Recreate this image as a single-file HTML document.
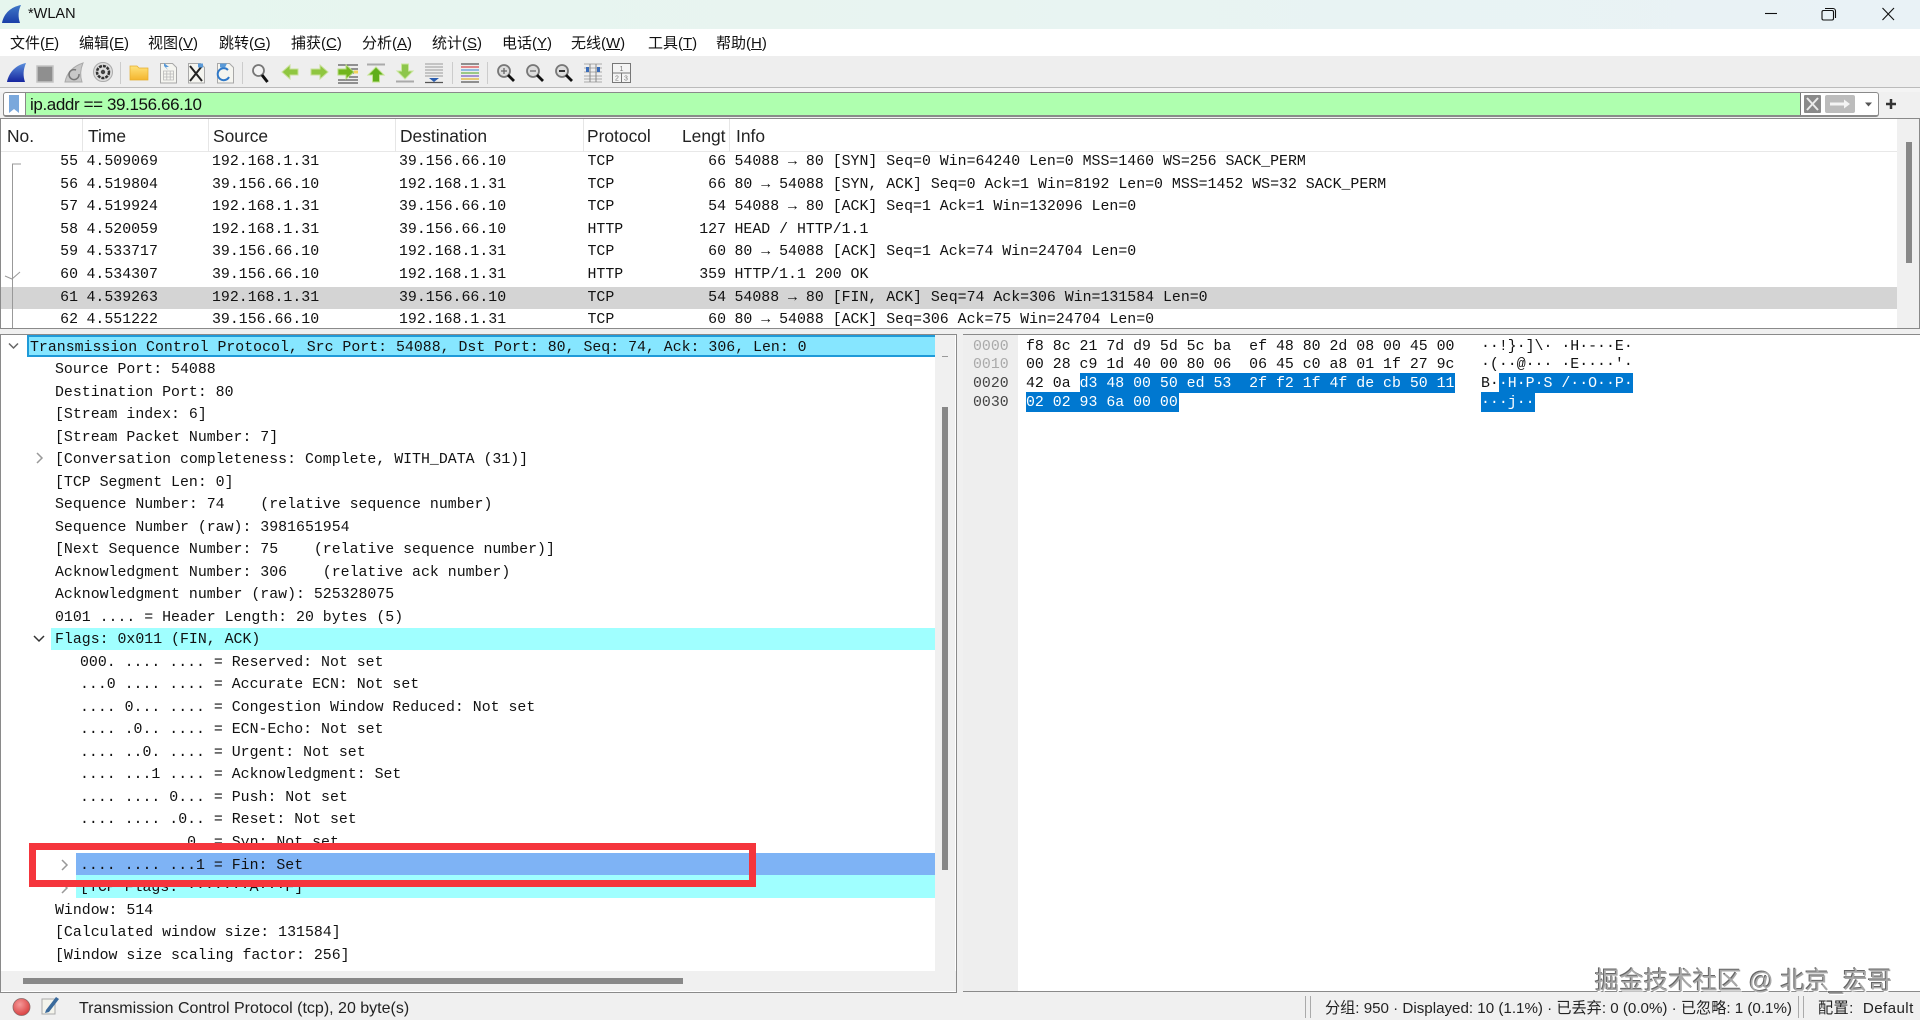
<!DOCTYPE html>
<html><head><meta charset="utf-8"><title>*WLAN</title>
<style>
html,body{margin:0;padding:0;width:1920px;height:1020px;overflow:hidden;background:#f0f0f0}
body{position:relative;font-family:"Liberation Sans","Noto Sans CJK SC",sans-serif;color:#111}
.a{position:absolute}
.m{position:absolute;top:31px;height:26px;line-height:26px;font-size:15px;white-space:nowrap;color:#111}
.m u{text-decoration:underline}
.h{position:absolute;top:1px;height:33px;line-height:33px;font-size:17.4px;color:#222;white-space:nowrap}
.s{position:absolute;top:0;width:1px;height:33px;background:#e6e6e6}
.mono{font-family:"Liberation Mono",monospace;font-size:14.88px;white-space:pre;color:#111}
.p{position:absolute;left:1px;width:1897px;height:22.5px;line-height:22.5px}
.p span{position:absolute;top:0}
.c1{right:1820px;left:auto}.c2{left:85.5px}.c3{left:211px}.c4{left:398px}.c5{left:586.5px}.c6{right:1172px}.c7{left:733.5px}
.d{position:absolute;height:22.5px;line-height:22.5px}
.x{position:absolute;height:19px;line-height:19px;font-family:"Liberation Mono",monospace;font-size:14.88px;white-space:pre;color:#111}
.w{color:#fff}
</style></head>
<body>
<!-- title bar -->
<div class="a" style="left:0;top:0;width:1920px;height:29px;background:linear-gradient(90deg,#e6f6ee,#e8f4f1 50%,#e9f2f6)"></div>
<svg class="a" style="left:0;top:0" width="30" height="29"><defs><linearGradient id="t" x1="0" y1="0" x2="0" y2="1"><stop offset="0" stop-color="#3f78c8"/><stop offset="1" stop-color="#1a3fa8"/></linearGradient></defs><path d="M2 23C4 13 11 7 21 5C18 11 18 17 20 23Z" fill="url(#t)"/></svg>
<div class="a" style="left:28px;top:4px;height:21px;line-height:21px;font-size:14.5px;color:#111">*WLAN</div>
<svg class="a" style="left:1750px;top:0" width="170" height="29" fill="none" stroke="#111" stroke-width="1.1"><path d="M15 13.5H27"/><path d="M73.5 10.5h8.5a1.5 1.5 0 0 1 1.5 1.5v6.5a1.5 1.5 0 0 1-1.5 1.5h-8.5a1.5 1.5 0 0 1-1.5-1.5V12a1.5 1.5 0 0 1 1.5-1.5Z"/><path d="M75 8.5h8a2.5 2.5 0 0 1 2.5 2.5v7"/><path d="M132.500 8L144 20M144 8L132.500 20"/></svg>
<!-- menu -->
<div class="a" style="left:0;top:29px;width:1920px;height:27px;background:#fff"></div>
<div class="m" style="left:10px">文件(<u>F</u>)</div>
<div class="m" style="left:79px">编辑(<u>E</u>)</div>
<div class="m" style="left:148px">视图(<u>V</u>)</div>
<div class="m" style="left:219px">跳转(<u>G</u>)</div>
<div class="m" style="left:291px">捕获(<u>C</u>)</div>
<div class="m" style="left:362px">分析(<u>A</u>)</div>
<div class="m" style="left:432px">统计(<u>S</u>)</div>
<div class="m" style="left:502px">电话(<u>Y</u>)</div>
<div class="m" style="left:571px">无线(<u>W</u>)</div>
<div class="m" style="left:648px">工具(<u>T</u>)</div>
<div class="m" style="left:716px">帮助(<u>H</u>)</div>
<!-- toolbar -->
<div class="a" style="left:0;top:56px;width:1920px;height:31px;background:#eee"></div>
<div class="a" style="left:0;top:87px;width:1920px;height:1px;background:#bbb"></div>
<div class="a" style="left:0;top:88px;width:1920px;height:4px;background:#f4f4f4"></div>
<svg class="a" style="left:0;top:56px" width="660" height="34" viewBox="0 56 660 34">
<defs><linearGradient id="fin" x1="0" y1="0" x2="0" y2="1"><stop offset="0" stop-color="#5a8fdc"/><stop offset="1" stop-color="#16259e"/></linearGradient>
<linearGradient id="fol" x1="0" y1="0" x2="0" y2="1"><stop offset="0" stop-color="#ffe27a"/><stop offset="1" stop-color="#f4b52e"/></linearGradient></defs>
<path d="M7 82C9 72 16 65 26 63C23 70 23 76 25 82Z" fill="url(#fin)"/>
<rect x="37" y="66" width="16" height="16" fill="#8f8f8f" stroke="#c4c4c4" stroke-width="1.500"/>
<path d="M65 82C67 72 74 66 83 63C80 70 80 76 82 82Z" fill="#c8c8c8" stroke="#aaa"/><path d="M76 70a5 5 0 1 0 3 4" fill="none" stroke="#777" stroke-width="1.500"/>
<circle cx="103" cy="72" r="9.500" fill="#ddd" stroke="#aaa"/><circle cx="103" cy="72" r="6" fill="none" stroke="#333" stroke-width="2.500" stroke-dasharray="3 1"/><circle cx="103" cy="72" r="2.200" fill="#444"/>
<rect x="120" y="62" width="1" height="22" fill="#ccc"/>
<path d="M130 66h7l2 2h9v12h-18Z" fill="url(#fol)" stroke="#e5ad2e" stroke-width=".7"/>
<path d="M160.500 63.500h12l4 4v15.500h-16Z" fill="#f5f5f0" stroke="#a8a8a8"/><path d="M164 63l5 4h-3l2 3-4-4Z" fill="#5a9ad8"/><path d="M163.500 71h10v9h-10ZM163.500 74h10M163.500 77h10M166.800 71v9M170.200 71v9" fill="none" stroke="#b8b8b8" stroke-width=".8"/>
<path d="M188.500 63.500h12l4 4v15.500h-16Z" fill="#f5f5f0" stroke="#a8a8a8"/><path d="M190 66l12 15M202 66l-12 15" stroke="#222" stroke-width="2"/><path d="M198 63.500h5v4h-5Z" fill="#5a9ad8"/>
<path d="M217.500 63.500h12l4 4v15.500h-16Z" fill="#f5f5f0" stroke="#a8a8a8"/><path d="M228 70a6 6 0 1 0 1 7" fill="none" stroke="#2f78c8" stroke-width="2"/><path d="M220 63.500h7l-2 4h-5Z" fill="#5a9ad8"/>
<rect x="242" y="62" width="1" height="22" fill="#ccc"/>
<circle cx="258.500" cy="70.500" r="5.500" fill="#f4f4f4" stroke="#777" stroke-width="1.800"/><path d="M262 75l5.500 7" stroke="#111" stroke-width="3"/>
<path d="M282 72l8-7v4h8v6h-8v4Z" fill="#8fc63f" stroke="#c8e09a"/>
<path d="M328 72l-8-7v4h-9v6h9v4Z" fill="#8fc63f" stroke="#c8e09a"/>
<path d="M338 65h20M349 69h9M349 73h9M349 77h9M338 80h20M338 83h20" stroke="#333" stroke-width="1.100"/><path d="M338 69h8v-4l8 7-8 7v-4h-8Z" fill="#72b51e" stroke="#b8dc80"/><path d="M354 72h4" stroke="#f1d25a" stroke-width="3"/>
<path d="M367 64.500h18" stroke="#aaa" stroke-width="2"/><path d="M376 67l8 8h-4.500v7h-7v-7H368Z" fill="#5fae1a" stroke="#c3e28e"/>
<path d="M396 81.500h18" stroke="#aaa" stroke-width="2"/><path d="M405 79l8-8h-4.500v-7h-7v7H397Z" fill="#8dc64a" stroke="#c9e69c"/>
<path d="M425 64h18M425 67h18M425 70h18M425 73h18M425 76h18" stroke="#999" stroke-width=".9"/><path d="M425 82.500h18" stroke="#555" stroke-width="1.200"/><path d="M429 78h10l-5 4Z" fill="#2a5cae"/>
<rect x="452" y="62" width="1" height="22" fill="#ccc"/>
<path d="M461 64h18" stroke="#555" stroke-width="1.200"/><path d="M461 67h18" stroke="#d8484c" stroke-width="1.200"/><path d="M461 70h18" stroke="#5c9ad8" stroke-width="1.200"/><path d="M461 73h18" stroke="#6ab24a" stroke-width="1.200"/><path d="M461 76h18" stroke="#7a5cc0" stroke-width="1.200"/><path d="M461 79h18" stroke="#e0b030" stroke-width="1.200"/><path d="M461 82h18" stroke="#555" stroke-width="1.200"/>
<rect x="487" y="62" width="1" height="22" fill="#ccc"/>
<g fill="#ddd" stroke="#777" stroke-width="1.800"><circle cx="504" cy="71" r="6"/><circle cx="533" cy="71" r="6"/><circle cx="562" cy="71" r="6"/></g>
<path d="M508 75l6 6M537 75l6 6M566 75l6 6" stroke="#111" stroke-width="2.800"/>
<path d="M501 71h6M504 68v6M530 71h6" stroke="#666" stroke-width="1.300"/><path d="M559 71h6" stroke="#333" stroke-width="2"/>
<path d="M584 64h18M584 82h18M584 68h18M584 72h18M584 76h18M584 79h18" stroke="#aaa" stroke-width=".9"/><path d="M590 64v18M596 64v18" stroke="#888"/><rect x="586" y="67" width="3" height="5" fill="#3a6cb8"/><rect x="597" y="67" width="3" height="5" fill="#3a6cb8"/>
<path d="M612.500 63.500h18v19h-18ZM612.500 73h18M621.500 73v9.500" fill="#f4f4f4" stroke="#777"/>
<g font-family="Liberation Sans,sans-serif" font-size="7" fill="#777" text-anchor="middle"><text x="621.500" y="71">1</text><text x="617" y="80.500">2</text><text x="626" y="80.500">3</text></g>
</svg>
<!-- filter -->
<div class="a" style="left:3px;top:92px;width:1874px;height:22px;border:1px solid #8a8a8a;border-bottom:2px solid #8a8a8a;border-radius:3px;background:#fff"></div>
<div class="a" style="left:26px;top:93px;width:1774px;height:22px;background:#afffaf"></div>
<div class="a" style="left:25px;top:93px;width:1px;height:22px;background:#888"></div>
<div class="a" style="left:1800px;top:93px;width:1px;height:22px;background:#777"></div>
<svg class="a" style="left:4px;top:93px" width="22" height="22"><path d="M5 2h10v18l-5-4-5 4Z" fill="#7aa8dc"/></svg>
<svg class="a" style="left:26px;top:93px" width="300" height="22"><text x="4" y="17" font-family="Liberation Sans,sans-serif" font-size="17" fill="#111" xml:space="preserve" textLength="172" lengthAdjust="spacing">ip.addr == 39.156.66.10</text></svg>
<svg class="a" style="left:1800px;top:92px" width="100" height="24"><rect x="4" y="3" width="17" height="18" rx="1" fill="#8a8a8a"/><path d="M7 6l11 12M18 6L7 18" stroke="#ececec" stroke-width="2"/><rect x="25" y="3" width="30" height="18" rx="2" fill="#bcbcbc"/><path d="M30 10.500h14v-3l6 4.500-6 4.500v-3H30Z" fill="#f4f4f4"/><path d="M65 10.500h7l-3.500 4Z" fill="#555"/><path d="M86 12h10M91 7v10" stroke="#333" stroke-width="2.500"/></svg>
<!-- packet list -->
<div class="a" style="left:0;top:118px;width:1918px;height:209px;border:1px solid #8a8a8a;background:#fff;overflow:hidden">
 <div class="a" style="left:0;top:32px;width:1896px;height:1px;background:#e8e8e8"></div>
 <div class="s" style="left:81px"></div><div class="s" style="left:207px"></div><div class="s" style="left:394px"></div><div class="s" style="left:582px"></div><div class="s" style="left:728px"></div><div class="s" style="left:1896px"></div>
 <div class="h" style="left:6px">No.</div><div class="h" style="left:87px">Time</div><div class="h" style="left:212px">Source</div><div class="h" style="left:399px">Destination</div><div class="h" style="left:586px">Protocol</div><div class="h" style="left:681px">Lengt</div><div class="h" style="left:735px">Info</div>
 <div class="a" style="left:0;top:168px;width:1897px;height:22px;background:#d4d4d4"></div>
 <div class="a" style="left:1896px;top:0;width:22px;height:209px;background:#f0f0f0"></div>
 <div class="a" style="left:1905px;top:23px;width:6px;height:121px;background:#888"></div>
 <svg class="a" style="left:0;top:0" width="30" height="209" fill="none" stroke="#999" stroke-width="1"><path d="M20 45H11.500V209"/><path d="M4 157l7 3 8-7"/></svg>
 <div class="mono">
 <div class="p" style="left:0;top:32px"><span class="c1">55</span><span class="c2">4.509069</span><span class="c3">192.168.1.31</span><span class="c4">39.156.66.10</span><span class="c5">TCP</span><span class="c6">66</span><span class="c7">54088 → 80 [SYN] Seq=0 Win=64240 Len=0 MSS=1460 WS=256 SACK_PERM</span></div>
 <div class="p" style="left:0;top:54.500px"><span class="c1">56</span><span class="c2">4.519804</span><span class="c3">39.156.66.10</span><span class="c4">192.168.1.31</span><span class="c5">TCP</span><span class="c6">66</span><span class="c7">80 → 54088 [SYN, ACK] Seq=0 Ack=1 Win=8192 Len=0 MSS=1452 WS=32 SACK_PERM</span></div>
 <div class="p" style="left:0;top:77px"><span class="c1">57</span><span class="c2">4.519924</span><span class="c3">192.168.1.31</span><span class="c4">39.156.66.10</span><span class="c5">TCP</span><span class="c6">54</span><span class="c7">54088 → 80 [ACK] Seq=1 Ack=1 Win=132096 Len=0</span></div>
 <div class="p" style="left:0;top:99.500px"><span class="c1">58</span><span class="c2">4.520059</span><span class="c3">192.168.1.31</span><span class="c4">39.156.66.10</span><span class="c5">HTTP</span><span class="c6">127</span><span class="c7">HEAD / HTTP/1.1</span></div>
 <div class="p" style="left:0;top:122px"><span class="c1">59</span><span class="c2">4.533717</span><span class="c3">39.156.66.10</span><span class="c4">192.168.1.31</span><span class="c5">TCP</span><span class="c6">60</span><span class="c7">80 → 54088 [ACK] Seq=1 Ack=74 Win=24704 Len=0</span></div>
 <div class="p" style="left:0;top:144.500px"><span class="c1">60</span><span class="c2">4.534307</span><span class="c3">39.156.66.10</span><span class="c4">192.168.1.31</span><span class="c5">HTTP</span><span class="c6">359</span><span class="c7">HTTP/1.1 200 OK</span></div>
 <div class="p" style="left:0;top:168px"><span class="c1">61</span><span class="c2">4.539263</span><span class="c3">192.168.1.31</span><span class="c4">39.156.66.10</span><span class="c5">TCP</span><span class="c6">54</span><span class="c7">54088 → 80 [FIN, ACK] Seq=74 Ack=306 Win=131584 Len=0</span></div>
 <div class="p" style="left:0;top:189.500px"><span class="c1">62</span><span class="c2">4.551222</span><span class="c3">39.156.66.10</span><span class="c4">192.168.1.31</span><span class="c5">TCP</span><span class="c6">60</span><span class="c7">80 → 54088 [ACK] Seq=306 Ack=75 Win=24704 Len=0</span></div>
 </div>
</div>
<!-- details pane -->
<div class="a" style="left:0;top:334px;width:955px;height:657px;border:1px solid #8a8a8a;border-bottom:1px solid #8a8a8a;background:#fff"></div>
<div class="a" style="left:1px;top:971px;width:955px;height:20px;background:#f0f0f0"></div>
<div class="a" style="left:935px;top:335px;width:20px;height:656px;background:#f0f0f0"></div>
<div class="a" style="left:23px;top:978px;width:660px;height:6px;background:#888"></div>
<div class="a" style="left:942px;top:356px;width:6px;height:1px;background:#999"></div>
<div class="a" style="left:942px;top:407px;width:6px;height:463px;background:#888"></div>
<div class="a" style="left:27px;top:335px;width:906px;height:18px;background:#86e6ff;border:2px solid #1f9ad8;border-right:0"></div>
<div class="a" style="left:51px;top:628px;width:884px;height:22px;background:#a0ffff"></div>
<div class="a" style="left:76px;top:875px;width:859px;height:23px;background:#a0ffff"></div>
<div class="a" style="left:76px;top:853px;width:859px;height:22px;background:#7eb3f5"></div>
<svg class="a" style="left:0;top:334px" width="76" height="570" fill="none" stroke="#666" stroke-width="1.500"><path d="M9 9.500l4.500 4.500 4.500-4.500"/></svg>
<svg class="a" style="left:0;top:440px" width="76" height="460" fill="none" stroke="#999" stroke-width="1.500"><path d="M37 13l5 5-5 5"/><path d="M62 420l5 5-5 5M62 443l5 5-5 5"/><path d="M34 196l5 5 5-5" stroke="#333"/></svg>
<div class="mono a" style="left:0;top:1.500px">
<div class="d" style="left:30px;top:335.500px">Transmission Control Protocol, Src Port: 54088, Dst Port: 80, Seq: 74, Ack: 306, Len: 0</div>
<div class="d" style="left:55px;top:357.500px">Source Port: 54088</div>
<div class="d" style="left:55px;top:380px">Destination Port: 80</div>
<div class="d" style="left:55px;top:402.600px">[Stream index: 6]</div>
<div class="d" style="left:55px;top:425px">[Stream Packet Number: 7]</div>
<div class="d" style="left:55px;top:447.600px">[Conversation completeness: Complete, WITH_DATA (31)]</div>
<div class="d" style="left:55px;top:470px">[TCP Segment Len: 0]</div>
<div class="d" style="left:55px;top:492.600px">Sequence Number: 74    (relative sequence number)</div>
<div class="d" style="left:55px;top:515px">Sequence Number (raw): 3981651954</div>
<div class="d" style="left:55px;top:537.700px">[Next Sequence Number: 75    (relative sequence number)]</div>
<div class="d" style="left:55px;top:560px">Acknowledgment Number: 306    (relative ack number)</div>
<div class="d" style="left:55px;top:582.700px">Acknowledgment number (raw): 525328075</div>
<div class="d" style="left:55px;top:605px">0101 .... = Header Length: 20 bytes (5)</div>
<div class="d" style="left:55px;top:627.800px">Flags: 0x011 (FIN, ACK)</div>
<div class="d" style="left:80px;top:650px">000. .... .... = Reserved: Not set</div>
<div class="d" style="left:80px;top:672.800px">...0 .... .... = Accurate ECN: Not set</div>
<div class="d" style="left:80px;top:695px">.... 0... .... = Congestion Window Reduced: Not set</div>
<div class="d" style="left:80px;top:717.800px">.... .0.. .... = ECN-Echo: Not set</div>
<div class="d" style="left:80px;top:740px">.... ..0. .... = Urgent: Not set</div>
<div class="d" style="left:80px;top:762.900px">.... ...1 .... = Acknowledgment: Set</div>
<div class="d" style="left:80px;top:785.400px">.... .... 0... = Push: Not set</div>
<div class="d" style="left:80px;top:807.900px">.... .... .0.. = Reset: Not set</div>
<div class="d" style="left:80px;top:830.400px">.... .... ..0. = Syn: Not set</div>
<div class="d" style="left:80px;top:853px">.... .... ...1 = Fin: Set</div>
<div class="d" style="left:80px;top:875.500px">[TCP Flags: ·······A···F]</div>
<div class="d" style="left:55px;top:898px">Window: 514</div>
<div class="d" style="left:55px;top:920.500px">[Calculated window size: 131584]</div>
<div class="d" style="left:55px;top:943px">[Window size scaling factor: 256]</div>
</div>
<!-- red annotation -->
<div class="a" style="left:29px;top:843px;width:713px;height:30px;border:7px solid #f5353c"></div>
<!-- hex pane -->
<div class="a" style="left:963px;top:334px;width:957px;height:1px;background:#8a8a8a"></div>
<div class="a" style="left:963px;top:335px;width:55px;height:656px;background:#eee"></div>
<div class="a" style="left:1018px;top:335px;width:902px;height:656px;background:#fff"></div>
<div class="a" style="left:963px;top:991px;width:957px;height:1px;background:#8a8a8a"></div>
<div class="a" style="left:1080px;top:373px;width:375px;height:20px;background:#0078d0"></div>
<div class="a" style="left:1026px;top:392px;width:153px;height:20px;background:#0078d0"></div>
<div class="a" style="left:1499px;top:373px;width:134px;height:20px;background:#0078d0"></div>
<div class="a" style="left:1481px;top:392px;width:54px;height:20px;background:#0078d0"></div>
<div class="x" style="left:973px;top:338px;color:#aaa">0000</div>
<div class="x" style="left:973px;top:356px;color:#aaa">0010</div>
<div class="x" style="left:973px;top:375px;color:#444">0020</div>
<div class="x" style="left:973px;top:394px;color:#444">0030</div>
<div class="x" style="left:1026px;top:338px">f8 8c 21 7d d9 5d 5c ba  ef 48 80 2d 08 00 45 00</div>
<div class="x" style="left:1026px;top:356px">00 28 c9 1d 40 00 80 06  06 45 c0 a8 01 1f 27 9c</div>
<div class="x" style="left:1026px;top:375px">42 0a <span class="w">d3 48 00 50 ed 53  2f f2 1f 4f de cb 50 11</span></div>
<div class="x" style="left:1026px;top:394px"><span class="w">02 02 93 6a 00 00</span></div>
<div class="x" style="left:1481px;top:338px">··!}·]\· ·H·-··E·</div>
<div class="x" style="left:1481px;top:356px">·(··@··· ·E····'·</div>
<div class="x" style="left:1481px;top:375px">B·<span class="w">·H·P·S /··O··P·</span></div>
<div class="x" style="left:1481px;top:394px"><span class="w">···j··</span></div>
<!-- watermark -->
<div class="a" style="left:1595px;top:967px;height:30px;line-height:30px;font-size:24.5px;color:#a8a8a8;white-space:nowrap;text-shadow:-1px -1px 0 #666,1px 1px 0 #fff">掘金技术社区 @ 北京_宏哥</div>
<!-- status bar -->
<svg class="a" style="left:0;top:992px" width="70" height="28"><defs><radialGradient id="rd" cx=".4" cy=".35" r=".7"><stop offset="0" stop-color="#f59a9a"/><stop offset="1" stop-color="#d83c3c"/></radialGradient></defs><circle cx="21.500" cy="15" r="8.500" fill="url(#rd)" stroke="#8a6a6a" stroke-width=".8"/><path d="M42 7h13v15H42Z" fill="#f4f4ec" stroke="#aaa"/><path d="M46 18l10-13 3 2-10 13-4 1Z" fill="#3a6a9c"/></svg>
<div class="a" style="left:79px;top:994px;height:28px;line-height:29px;font-size:16px;color:#222;white-space:nowrap">Transmission Control Protocol (tcp), 20 byte(s)</div>
<div class="a" style="left:1305px;top:996px;width:4px;height:22px;border-left:1px solid #aaa;border-right:1px solid #aaa"></div>
<div class="a" style="left:1325px;top:994px;height:28px;line-height:29px;font-size:15.15px;color:#222;white-space:nowrap">分组: 950 · Displayed: 10 (1.1%) · 已丢弃: 0 (0.0%) · 已忽略: 1 (0.1%)</div>
<div class="a" style="left:1798px;top:996px;width:4px;height:22px;border-left:1px solid #aaa;border-right:1px solid #aaa"></div>
<div class="a" style="left:1818px;top:994px;height:28px;line-height:29px;font-size:15.15px;letter-spacing:.4px;color:#222;white-space:pre">配置:  Default</div>
</body></html>
